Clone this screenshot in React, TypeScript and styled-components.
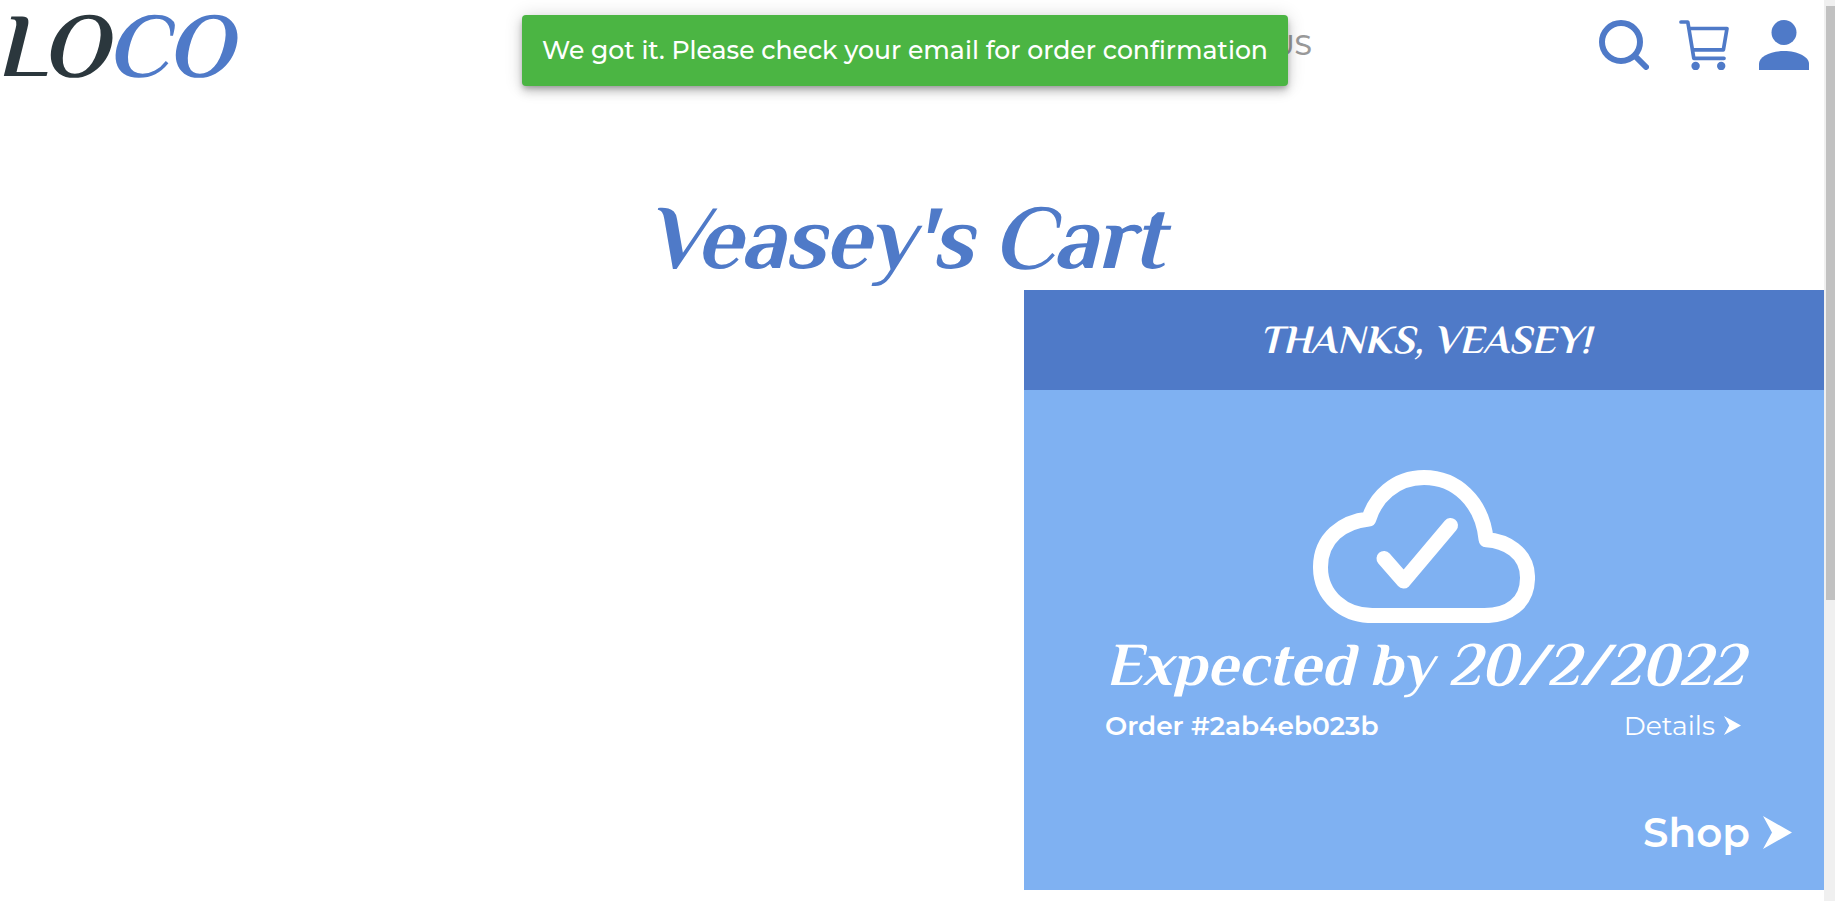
import React from "react";
import styled, { createGlobalStyle } from "styled-components";

const blue = "#4f7ac8";
const sans = `Montserrat, Inter, "Liberation Sans", sans-serif`;
const serif = `Philosopher, "Liberation Serif", serif`;

const Global = createGlobalStyle`
  * { box-sizing: border-box; }
  body { margin: 0; background: #fff; overflow: hidden; }
`;

const Shell = styled.div`
  display: flex;
  width: 100%;
  height: 901px;
  overflow: hidden;
  font-family: ${sans};
`;

const Page = styled.main`
  flex: 1;
  display: flex;
  flex-direction: column;
`;

const Track = styled.div`
  width: 11px;
  padding: 6px 0 0 2px;
  background: #f0f0f0;
`;

const Thumb = styled.div`
  height: 594px;
  background: #c1c1c1;
`;

const Header = styled.header`
  display: flex;
  justify-content: space-between;
  height: 190px;
  padding: 0 15px 0 0;
`;

const Slanted = styled.span<{ $size: number; $spacing?: number }>`
  display: inline-block;
  font-family: ${serif};
  font-size: ${(p) => p.$size}px;
  font-weight: 700;
  letter-spacing: ${(p) => p.$spacing ?? 0}px;
  line-height: 1.12;
  white-space: nowrap;
  transform: skewX(-14deg);
  transform-origin: 0 80%;
`;

const Logo = styled.a`
  color: #2b373d;
  width: 400px;
  margin: -4px 0 0 -5px;
  span span { color: ${blue}; }
`;

const NavLink = styled.a`
  margin: 28px 0 0 auto;
  padding-right: 287px;
  font-size: 28px;
  font-weight: 500;
  line-height: 34px;
  color: #999;
`;

const Icons = styled.nav`
  display: flex;
  gap: 30px;
  padding-top: 20px;
  svg { display: block; }
`;

const Toast = styled.div`
  position: absolute;
  left: 522px;
  top: 15px;
  width: 766px;
  height: 71px;
  padding-left: 20px;
  border-radius: 4px;
  background: #4bb543;
  color: #fff;
  font-size: 25.12px;
  font-weight: 500;
  line-height: 70px;
  white-space: nowrap;
  box-shadow: 0 3px 5px -1px rgba(0, 0, 0, 0.22), 0 6px 10px rgba(0, 0, 0, 0.16), 0 1px 18px rgba(0, 0, 0, 0.16);
`;

const Title = styled.h1`
  height: 102px;
  margin: -2px 0 0;
  padding-left: 646px;
  color: ${blue};
`;

const Card = styled.section`
  align-self: flex-end;
  width: 800px;
  height: 600px;
  display: flex;
  flex-direction: column;
  background: #7fb1f2;
  color: #fff;
`;

const CardHead = styled.div`
  height: 100px;
  padding: 28px 0 0 235px;
  background: ${blue};
`;

const CardBody = styled.div`
  flex: 1;
  display: flex;
  flex-direction: column;
  padding: 80px 32px 0 81px;
`;

const CloudWrap = styled.div`
  height: 160px;
  padding-left: 208px;
`;

const Expected = styled.div`
  height: 78px;
`;

const Row = styled.div`
  display: flex;
  justify-content: space-between;
  padding-right: 51px;
  height: 36px;
`;

const Label = styled.span<{ $size: number; $weight: number }>`
  display: flex;
  align-items: center;
  font-size: ${(p) => p.$size}px;
  font-weight: ${(p) => p.$weight};
  line-height: 36px;
  white-space: nowrap;
`;

const ShopRow = styled.div`
  display: flex;
  justify-content: flex-end;
  padding-top: 71px;
`;

const ArrowSvg = styled.svg`
  position: relative;
  top: -1px;
`;

const Arrow = ({ w, h, gap }: { w: number; h: number; gap: number }) => (
  <ArrowSvg width={w + gap} height={h} viewBox={`${-gap} 0 ${w + gap} ${h}`}>
    <path d={`M0 0L${w} ${h / 2}L0 ${h}L${w * 0.31} ${h / 2}Z`} fill="#fff" />
  </ArrowSvg>
);

const SearchIcon = () => (
  <svg width="50" height="50" fill="none" stroke={blue}>
    <circle cx="22" cy="22" r="19" strokeWidth="6" />
    <path d="M36 36L47 47" strokeWidth="6" strokeLinecap="round" />
  </svg>
);

const CartIcon = () => (
  <svg width="50" height="50" fill="none" stroke={blue} strokeWidth="3.7" strokeLinecap="round" strokeLinejoin="round">
    <path d="M2 2H8.8L14.8 38.3H45M11 8.5H48L44.4 29.8H14" />
    <circle cx="16.6" cy="46" r="4.2" fill={blue} stroke="none" />
    <circle cx="42.2" cy="46" r="4.2" fill={blue} stroke="none" />
  </svg>
);

const PersonIcon = () => (
  <svg width="50" height="50" fill={blue}>
    <circle cx="25" cy="12.5" r="12.5" />
    <path d="M0 50V43.7C0 36.8 11.3 31 25 31S50 36.8 50 43.7V50Z" />
  </svg>
);

const CloudIcon = () => (
  <svg width="222" height="153" fill="none" stroke="#fff" strokeWidth="15" strokeLinecap="round" strokeLinejoin="round">
    <g transform="translate(.6 -33.8) scale(.4313)" strokeWidth="34.8">
      <path d="M400 240c-8.89-89.54-71-144-144-144-69 0-113.44 48.2-128 96-60 6-112 43.59-112 112 0 66 54 112 120 112h260c55 0 100-27.44 100-88 0-59.82-53-85.8-96-88z" />
    </g>
    <path d="M71 88.5L90.7 111L137.5 55.5" />
  </svg>
);

export default function App() {
  return (
    <Shell>
      <Global />
      <Page>
        <Header>
          <Logo>
            <Slanted $size={90} $spacing={-1}>
              LO<span>CO</span>
            </Slanted>
          </Logo>
          <NavLink>US</NavLink>
          <Icons>
            <SearchIcon />
            <CartIcon />
            <PersonIcon />
          </Icons>
        </Header>
        <Title>
          <Slanted $size={90} $spacing={-1.35}>Veasey's Cart</Slanted>
        </Title>
        <Card>
          <CardHead>
            <Slanted $size={40}>THANKS, VEASEY!</Slanted>
          </CardHead>
          <CardBody>
            <CloudWrap>
              <CloudIcon />
            </CloudWrap>
            <Expected>
              <Slanted $size={61}>Expected by 20/2/2022</Slanted>
            </Expected>
            <Row>
              <Label $size={26.4} $weight={600}>Order #2ab4eb023b</Label>
              <Label $size={26.6} $weight={400}>
                Details
                <Arrow w={17} h={19} gap={9} />
              </Label>
            </Row>
            <ShopRow>
              <Label $size={40.4} $weight={600}>
                Shop
                <Arrow w={29} h={33} gap={13} />
              </Label>
            </ShopRow>
          </CardBody>
        </Card>
      </Page>
      <Track>
        <Thumb />
      </Track>
      <Toast>We got it. Please check your email for order confirmation</Toast>
    </Shell>
  );
}
